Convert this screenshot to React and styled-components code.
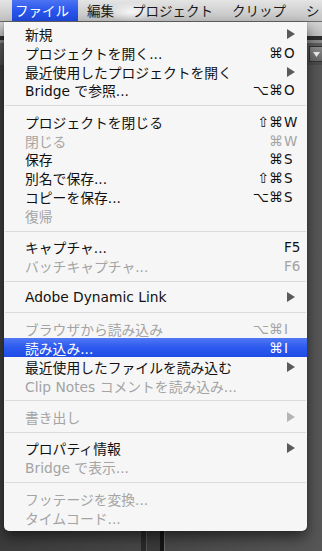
import styled, { createGlobalStyle } from "styled-components";

const GlobalStyle = createGlobalStyle`
  html, body { margin: 0; padding: 0; background: #444; }
  body { font-family: "DejaVu Sans", "Noto Sans CJK JP", sans-serif; }
`;

const menuTitles = ["ファイル", "編集", "プロジェクト", "クリップ", "シ"];

// null = separator
const items = [
  { label: "新規", sub: true },
  { label: "プロジェクトを開く...", mods: "⌘", key: "O" },
  { label: "最近使用したプロジェクトを開く", sub: true },
  { label: "Bridge で参照...", mods: "⌥⌘", key: "O" },
  null,
  { label: "プロジェクトを閉じる", mods: "⇧⌘", key: "W" },
  { label: "閉じる", mods: "⌘", key: "W", disabled: true },
  { label: "保存", mods: "⌘", key: "S" },
  { label: "別名で保存...", mods: "⇧⌘", key: "S" },
  { label: "コピーを保存...", mods: "⌥⌘", key: "S" },
  { label: "復帰", disabled: true },
  null,
  { label: "キャプチャ...", key: "F5" },
  { label: "バッチキャプチャ...", key: "F6", disabled: true },
  null,
  { label: "Adobe Dynamic Link", sub: true },
  null,
  { label: "ブラウザから読み込み", mods: "⌥⌘", key: "I", disabled: true },
  { label: "読み込み...", mods: "⌘", key: "I", active: true },
  { label: "最近使用したファイルを読み込む", sub: true },
  { label: "Clip Notes コメントを読み込み...", disabled: true },
  null,
  { label: "書き出し", sub: true, disabled: true },
  null,
  { label: "プロパティ情報", sub: true },
  { label: "Bridge で表示...", disabled: true },
  null,
  { label: "フッテージを変換...", disabled: true },
  { label: "タイムコード...", disabled: true },
];

export default function App() {
  return (
    <>
      <GlobalStyle />
      <Screen>
        <MenuBar>
          {menuTitles.map((t, i) => (
            <MenuTitle key={t} $active={i === 0}>{t}</MenuTitle>
          ))}
        </MenuBar>
        <Workspace>
          <Toolbar />
          <PanelHeader>
            <DropButton>
              <svg width="7" height="5" viewBox="0 0 7 5">
                <polygon points="0,0 7,0 3.5,5" fill="#eee" />
              </svg>
            </DropButton>
          </PanelHeader>
          <PanelBody>
            <Column $w={141} />
            <Divider $w={5} />
            <Column $w={13} $shade />
            <Divider $w={4} $dark />
            <Column $grow />
          </PanelBody>
        </Workspace>

        <Dropdown>
          {items.map((it, i) =>
            it === null ? (
              <Separator key={i} />
            ) : (
              <Item key={i} $disabled={it.disabled} $active={it.active}>
                <Label>{it.label}</Label>
                <Mods>{it.mods}</Mods>
                <KeyCell>
                  {it.sub ? (
                    <svg width="8" height="10" viewBox="0 0 8 10">
                      <polygon
                        points="0,0 8,5 0,10"
                        fill={it.disabled ? "#b4b4b4" : "#5a5a5a"}
                      />
                    </svg>
                  ) : (
                    it.key
                  )}
                </KeyCell>
              </Item>
            )
          )}
        </Dropdown>
      </Screen>
    </>
  );
}

const Screen = styled.div`
  position: relative;
  width: 322px;
  height: 551px;
  overflow: hidden;
  display: flex;
  flex-direction: column;
  background: #454545;
`;

const MenuBar = styled.div`
  height: 21px;
  flex: none;
  display: flex;
  align-items: stretch;
  padding-left: 12px;
  border-bottom: 1px solid #6a6a6a;
  background:
    radial-gradient(ellipse 40px 14px at 132px 12px, rgba(255,255,255,0.85), rgba(255,255,255,0) 70%),
    linear-gradient(#e4e4e4, #cfcfcf 60%, #c4c4c4);
`;

const MenuTitle = styled.div`
  flex: none;
  white-space: nowrap;
  display: flex;
  align-items: center;
  padding: 0 9px 0 ${(p) => (p.$active ? "3px" : "9px")};
  font-family: "Noto Sans CJK JP", sans-serif;
  font-size: 13.5px;
  line-height: 1;
  color: ${(p) => (p.$active ? "#fff" : "#1a1a1a")};
  background: ${(p) =>
    p.$active ? "linear-gradient(#4d74f4, #2754ea 55%, #1f4be2)" : "transparent"};
  &:nth-child(n + 4) { padding: 0 10px 0 10px; }
`;

const Workspace = styled.div`
  flex: 1;
  display: flex;
  flex-direction: column;
  background: #444;
`;

const Toolbar = styled.div`
  height: 14px;
  background: linear-gradient(#d2d2d2, #bdbdbd);
  border-bottom: 4px solid #2e2e2e;
`;

const PanelHeader = styled.div`
  height: 22px;
  display: flex;
  justify-content: flex-end;
  align-items: center;
  background: linear-gradient(#5d5d5d, #4a4a4a);
  border-top: 3px solid #888;
`;

const DropButton = styled.div`
  width: 12px;
  height: 14px;
  display: flex;
  align-items: center;
  justify-content: center;
  background: linear-gradient(#8a8a8a, #666);
  border: 1px solid #333;
  border-right: none;
`;

const PanelBody = styled.div`
  flex: 1;
  display: flex;
  background: linear-gradient(90deg, #3c3c3c, #4a4a4a 60%, #565656);
`;

const Column = styled.div`
  width: ${(p) => (p.$w ? `${p.$w}px` : "auto")};
  flex: ${(p) => (p.$grow ? 1 : "none")};
  background: ${(p) => (p.$shade ? "#3a3a3a" : "transparent")};
`;

const Divider = styled.div`
  width: ${(p) => p.$w}px;
  flex: none;
  background: ${(p) => (p.$dark ? "#151515" : "#2a2a2a")};
  border-right: 1px solid ${(p) => (p.$dark ? "#6a6a6a" : "#555")};
`;

const Dropdown = styled.div`
  position: absolute;
  top: 22px;
  left: 4px;
  width: 303px;
  padding: 2px 0 5px;
  background: #f6f6f6;
  border-radius: 0 0 5px 5px;
  box-shadow: 0 6px 14px rgba(0, 0, 0, 0.55), 0 0 1px rgba(0, 0, 0, 0.5);
`;

const Item = styled.div`
  height: 18.8px;
  display: grid;
  grid-template-columns: 1fr auto 14px;
  align-items: center;
  padding: 0 9px 0 21px;
  font-size: 13.8px;
  color: ${(p) => (p.$active ? "#fff" : p.$disabled ? "#a4a4a4" : "#111")};
  background: ${(p) =>
    p.$active ? "linear-gradient(#5078f4, #2c59ee 50%, #1f4ce4)" : "transparent"};
`;

const Label = styled.span`
  white-space: nowrap;
  font-family: "DejaVu Sans", "Noto Sans CJK JP", sans-serif;
`;

const Mods = styled.span`
  font-family: "DejaVu Sans", sans-serif;
  font-size: 14px;
  text-align: right;
  padding-right: 1px;
`;

const KeyCell = styled.span`
  font-family: "DejaVu Sans", sans-serif;
  font-size: 13.5px;
  display: flex;
  align-items: center;
  svg { margin-left: 3px; }
`;

const Separator = styled.div`
  height: 12.7px;
  display: flex;
  align-items: center;
  &::before {
    content: "";
    flex: 1;
    height: 1px;
    margin: 0 1px;
    background: #dadada;
  }
`;
